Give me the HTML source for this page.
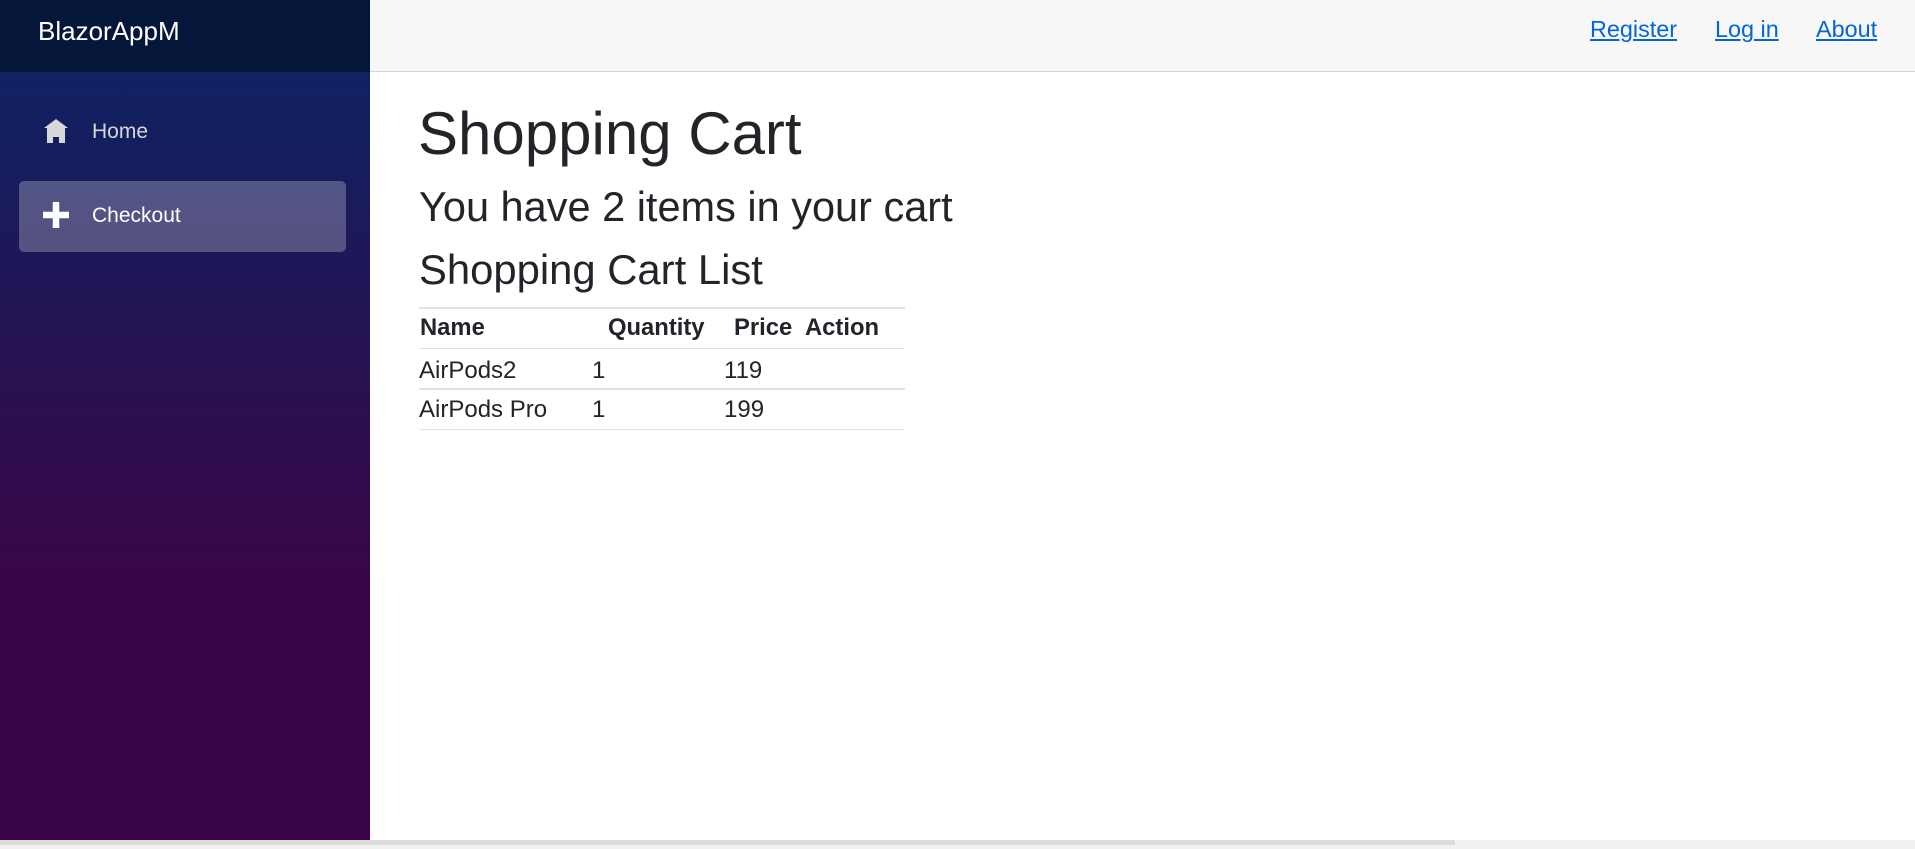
<!DOCTYPE html>
<html><head><meta charset="utf-8"><style>
*{margin:0;padding:0;box-sizing:border-box}
body{width:1915px;height:849px;overflow:hidden;font-family:"Liberation Sans",Arial,sans-serif;background:#f1f1f1;position:relative;color:#212529}
.side{position:absolute;left:0;top:0;width:370px;height:840px;background:linear-gradient(180deg,#0f2262 72px,#3a0647 70%)}
.brandbar{position:absolute;left:0;top:0;width:370px;height:72px;background:#041639}
.brand{position:absolute;left:38px;top:16px;font-size:26px;color:#fff}
.nav{position:absolute;left:92px;font-size:21px;color:#d7d7d7}
.act{position:absolute;left:19px;top:181px;width:327px;height:71px;border-radius:5px;background:rgba(255,255,255,0.25)}
.main{position:absolute;left:370px;top:0;width:1545px;height:840px;background:#fff}
.top{position:absolute;left:370px;top:0;width:1545px;height:72px;background:#f7f7f7;border-bottom:1px solid #d6d5d5}
.lnk{position:absolute;top:16px;font-size:23.4px;color:#0366d6;text-decoration:underline}
.t{position:absolute;white-space:nowrap;font-family:"Liberation Sans",Arial,sans-serif}
.line{position:absolute;left:419px;width:486px;height:1px;background:#dee2e6}
.scroll{position:absolute;left:0;top:840px;width:1455px;height:5px;background:#dcdcdc}
</style></head><body>
<div class="side"></div>
<div class="brandbar"></div>
<div class="brand">BlazorAppM</div>
<div class="act"></div>
<svg style="position:absolute;left:43px;top:119px" width="26" height="24" viewBox="0 0 8 8"><path fill="#d7d7d7" d="M4 0L0 3h1v5h2V6h2v2h2V3h1z"/></svg>
<div class="nav" style="top:120px">Home</div>
<svg style="position:absolute;left:43px;top:202px" width="26" height="26" viewBox="0 0 8 8"><path fill="#fff" d="M3 0v3H0v2h3v3h2V5h3V3H5V0z"/></svg>
<div class="nav" style="top:204px;color:#fff">Checkout</div>
<div class="main"></div>
<div class="top"></div>
<div class="lnk" style="left:1590px">Register</div>
<div class="lnk" style="left:1715px">Log in</div>
<div class="lnk" style="left:1816px">About</div>
<div class="t" style="left:418px;top:98px;font-size:60px;line-height:72px">Shopping Cart</div>
<div class="t" style="left:419px;top:182px;font-size:41.5px;line-height:50px">You have 2 items in your cart</div>
<div class="t" style="left:419px;top:245px;font-size:41.8px;line-height:50px">Shopping Cart List</div>
<div class="line" style="top:307px;height:2px"></div>
<div class="t" style="left:420px;top:314px;font-size:23.8px;font-weight:bold">Name</div>
<div class="t" style="left:608px;top:314px;font-size:23.8px;font-weight:bold">Quantity</div>
<div class="t" style="left:734px;top:314px;font-size:23.8px;font-weight:bold">Price</div>
<div class="t" style="left:805px;top:314px;font-size:23.8px;font-weight:bold">Action</div>
<div class="line" style="top:348px"></div>
<div class="t" style="left:419px;top:357px;font-size:24px">AirPods2</div>
<div class="t" style="left:592px;top:357px;font-size:24px">1</div>
<div class="t" style="left:724px;top:357px;font-size:24px">119</div>
<div class="line" style="top:388px;height:2px"></div>
<div class="t" style="left:419px;top:396px;font-size:24px">AirPods Pro</div>
<div class="t" style="left:592px;top:396px;font-size:24px">1</div>
<div class="t" style="left:724px;top:396px;font-size:24px">199</div>
<div class="line" style="top:429px"></div>
<div class="scroll"></div>
</body></html>
